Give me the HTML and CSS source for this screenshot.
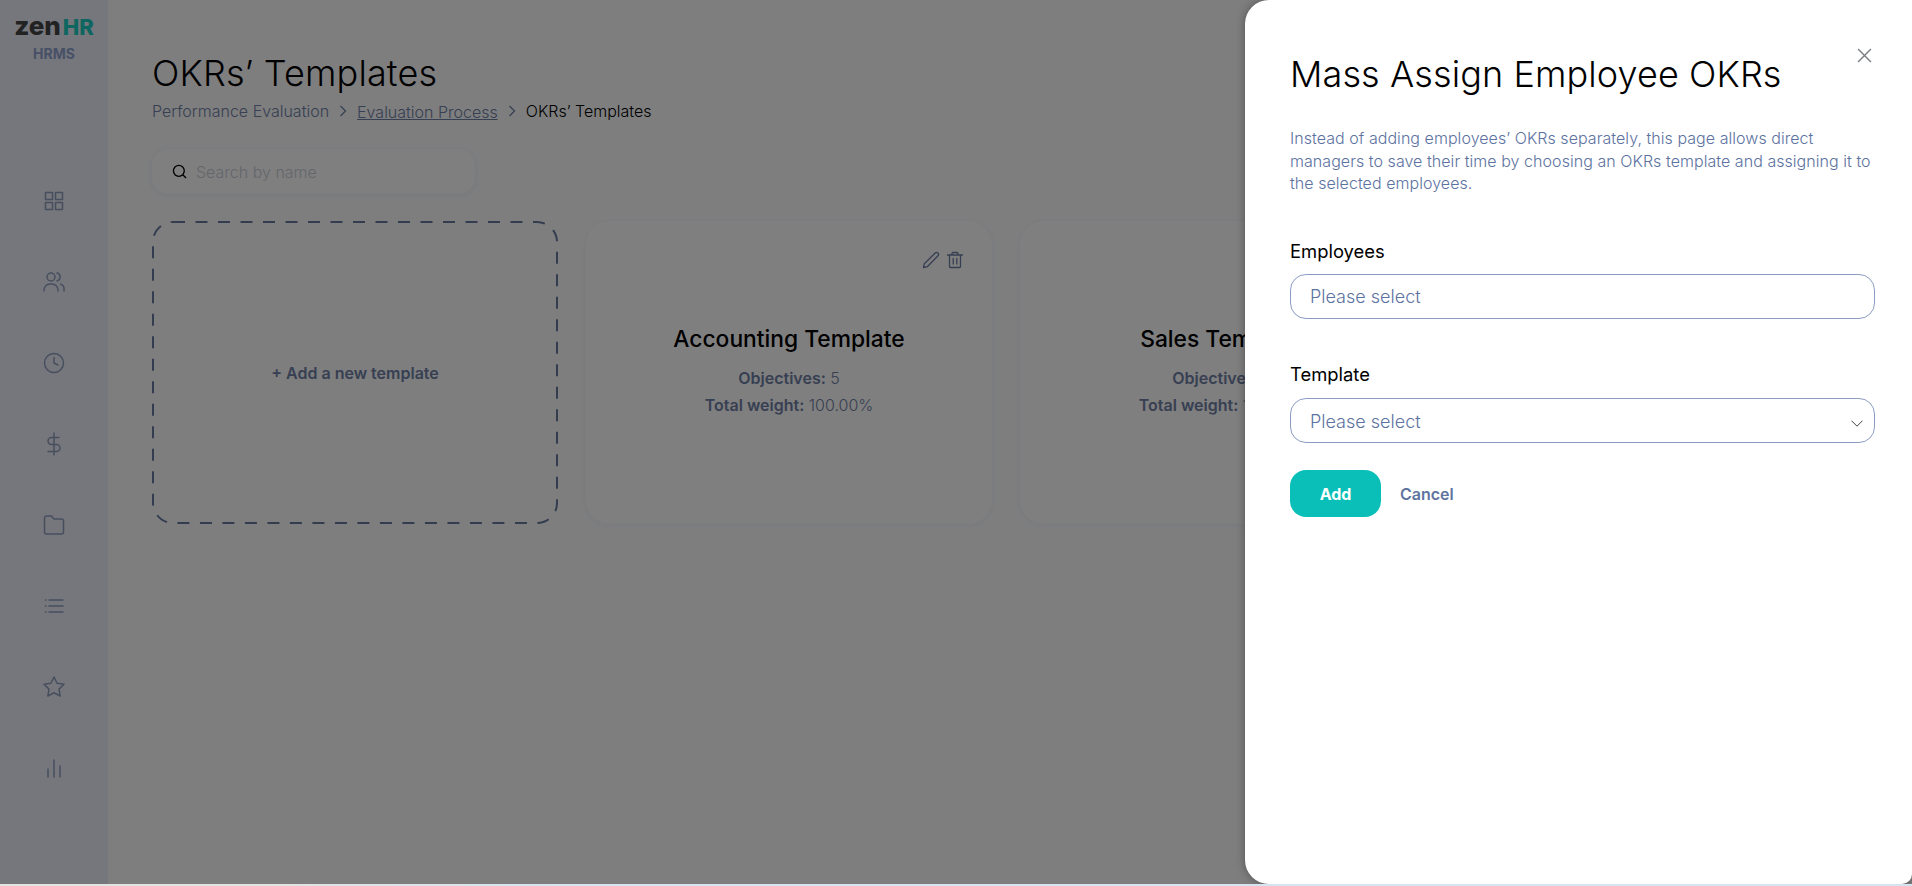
FILE: index.html
```html
<!DOCTYPE html>
<html lang="en">
  <head>
    <meta charset="UTF-8" />
    <title>OKRs' Templates</title>
    <link rel="stylesheet" href="styles.css">
  </head>
  <body>
    <div class="app">
      <aside class="sidebar">
        <div class="logo"><span class="logo-zen">zen</span><span class="logo-hr">HR</span></div>
        <div class="logo-sub">HRMS</div>
        <nav class="side-nav">
          <svg class="nav-icon" viewBox="0 0 24 24"><rect x="3.5" y="3.5" width="7" height="7" /><rect x="13.5" y="3.5" width="7" height="7" /><rect x="3.5" y="13.5" width="7" height="7" /><rect x="13.5" y="13.5" width="7" height="7" /></svg>
          <svg class="nav-icon" viewBox="0 0 24 24"><circle cx="9" cy="7" r="4" /><path d="M15 3.1a4 4 0 0 1 0 7.8" /><path d="M2 21v-1a6 6 0 0 1 6-6h2a6 6 0 0 1 6 6v1" /><path d="M18.5 14.2a4.5 4.5 0 0 1 3.5 4.4V21" /></svg>
          <svg class="nav-icon" viewBox="0 0 24 24"><circle cx="12" cy="12" r="9.5" /><path d="M12 6.5V12l4 2" /></svg>
          <svg class="nav-icon" viewBox="0 0 24 24"><path d="M12 1v22" /><path d="M17 5.5H9.5a3.5 3.5 0 0 0 0 7h5a3.5 3.5 0 0 1 0 7H6" /></svg>
          <svg class="nav-icon" viewBox="0 0 24 24"><path d="M2.5 5a2 2 0 0 1 2-2h5l2.5 3h7.500a2 2 0 0 1 2 2v11a2 2 0 0 1-2 2h-15a2 2 0 0 1-2-2z" /></svg>
          <svg class="nav-icon" viewBox="0 0 24 24"><path d="M7 6h14M7 12h14M7 18h14M3.500 6h.5M3.500 12h.5M3.500 18h.5" /></svg>
          <svg class="nav-icon" viewBox="0 0 24 24"><path d="M12 2l3.090 6.260L22 9.270l-5 4.870 1.180 6.880L12 17.770l-6.180 3.250L7 14.140 2 9.270l6.910-1.010z" /></svg>
          <svg class="nav-icon" viewBox="0 0 24 24"><path d="M6 13v8M12 4v17M18 10v11" /></svg>
        </nav>
      </aside>

      <main class="content">
        <h1 class="page-title">OKRs’ Templates</h1>
        <div class="breadcrumb">
          <span>Performance Evaluation</span>
          <svg class="crumb-sep" viewBox="0 0 8 12"><path d="M1.500 1l5 5-5 5" /></svg>
          <a href="#">Evaluation Process</a>
          <svg class="crumb-sep" viewBox="0 0 8 12"><path d="M1.500 1l5 5-5 5" /></svg>
          <span class="crumb-current">OKRs’ Templates</span>
        </div>

        <div class="search-box">
          <svg class="search-icon" viewBox="0 0 16 16"><circle cx="7.300" cy="7.300" r="5.800" /><path d="M11.500 11.500l3.500 3.500" /></svg>
          <input type="text" placeholder="Search by name" />
        </div>

        <div class="template-grid">
          <div class="template-card add-card">
            <svg class="dash-frame" width="100%" height="100%"><rect x="1" y="1" width="404" height="301" rx="20" /></svg>
            <span class="add-label">+ Add a new template</span>
          </div>
          <div class="template-card">
            <div class="card-actions">
              <svg viewBox="0 0 18 18"><path d="M1.500 16.500l.8-3.800L13.200 2a1.800 1.800 0 0 1 2.500 0l.3.300a1.800 1.800 0 0 1 0 2.500L5.300 15.700z" /></svg>
              <svg viewBox="0 0 18 18"><path d="M1.500 4h15M6 4V2.500A1 1 0 0 1 7 1.500h4a1 1 0 0 1 1 1V4M3.500 4v11.500a1 1 0 0 0 1 1h9a1 1 0 0 0 1-1V4M7.200 7.500v5.500M10.800 7.500v5.500" /></svg>
            </div>
            <h3 class="card-title">Accounting Template</h3>
            <p class="card-stat"><b>Objectives:</b> 5</p>
            <p class="card-stat"><b>Total weight:</b> 100.00%</p>
          </div>
          <div class="template-card">
            <h3 class="card-title">Sales Template</h3>
            <p class="card-stat"><b>Objectives:</b> 5</p>
            <p class="card-stat"><b>Total weight:</b> 100.00%</p>
          </div>
        </div>
      </main>

      <div class="overlay"></div>

      <section class="side-panel">
        <svg class="close-btn" viewBox="0 0 14 14"><path d="M1 1l12 12M13 1L1 13" /></svg>
        <h2 class="panel-title">Mass Assign Employee OKRs</h2>
        <p class="panel-desc">Instead of adding employees’ OKRs separately, this page allows direct managers to save their time by choosing an OKRs template and assigning it to the selected employees.</p>
        <form>
          <label class="field-label" for="employees">Employees</label>
          <input class="field-input" id="employees" type="text" placeholder="Please select" />
          <label class="field-label second" for="template">Template</label>
          <div class="select-wrap">
            <select class="field-input" id="template"><option>Please select</option></select>
            <svg class="select-arrow" viewBox="0 0 12 7"><path d="M.5.700L6 6.200 11.500.700" /></svg>
          </div>
          <div class="form-buttons">
            <button type="button" class="add-btn">Add</button>
            <button type="button" class="cancel-btn">Cancel</button>
          </div>
        </form>
      </section>
    </div>
    <div class="bottom-strip"></div>
  </body>
</html>
```

FILE: styles.css
```css
* {
  box-sizing: border-box;
}

body {
  font-family: "Inter", sans-serif;
  margin: 0;
  background: #d5e4f0;
  overflow: hidden;
}

.app {
  position: relative;
  display: flex;
  height: 884px;
  overflow: hidden;
  background: #fcfdff;
}

.bottom-strip {
  height: 2px;
  background: linear-gradient(90deg, #e2e3e3 15%, #d5e4f0 30%);
}

/* sidebar */
.sidebar {
  width: 108px;
  flex-shrink: 0;
  background: #eceef8;
  display: flex;
  flex-direction: column;
  align-items: center;
}

.logo {
  display: flex;
  align-items: baseline;
  gap: 2px;
  height: 42px;
  padding-top: 11px;
  line-height: 30px;
  font-weight: 800;
}

.logo-zen {
  font-size: 26px;
  color: #444446;
}

.logo-hr {
  font-size: 22px;
  color: #1bcdc0;
}

.logo-sub {
  margin-top: 3px;
  font-size: 14px;
  line-height: 18px;
  font-weight: 700;
  color: #8ea1cf;
}

.side-nav {
  margin-top: 126px;
  display: flex;
  flex-direction: column;
  gap: 57px;
}

.nav-icon {
  display: block;
  width: 24px;
  height: 24px;
  fill: none;
  stroke: #8f9dbd;
  stroke-width: 1.5;
  stroke-linecap: round;
  stroke-linejoin: round;
}

/* main area */
.content {
  flex: 1;
  padding: 50px 44px 0;
}

.page-title {
  margin: 0;
  font-size: 36px;
  line-height: 46px;
  font-weight: 300;
  letter-spacing: 0.15px;
  color: #000;
}

.breadcrumb {
  display: flex;
  align-items: center;
  height: 24px;
  margin-top: 3px;
  font-size: 16px;
  font-weight: 300;
  color: #6f80a4;
}

.breadcrumb a {
  margin-top: 2px;
  color: #6f80a4;
  text-decoration: underline;
}

.crumb-sep {
  width: 8px;
  height: 12px;
  margin: 0 10px;
  fill: none;
  stroke: #6f80a4;
  stroke-width: 1.3;
}

.crumb-current {
  color: #000;
}

.search-box {
  display: flex;
  align-items: center;
  gap: 9px;
  width: 323px;
  height: 45px;
  margin-top: 26px;
  padding-left: 20px;
  background: #fff;
  border-radius: 16px;
  box-shadow: 0 1px 6px rgba(30, 50, 90, 0.08);
}

.search-icon {
  width: 15px;
  height: 15px;
  flex-shrink: 0;
  fill: none;
  stroke: #000;
  stroke-width: 1.4;
}

.search-box input {
  border: none;
  outline: none;
  background: transparent;
  font-family: inherit;
  font-size: 16px;
  font-weight: 300;
  flex: 1;
  padding: 0;
}

.search-box input::placeholder {
  color: #c9cdd6;
}

.template-grid {
  display: grid;
  grid-template-columns: repeat(3, 406px);
  gap: 28px;
  margin-top: 27px;
}

.template-card {
  position: relative;
  height: 303px;
  padding-bottom: 3px;
  background: #fff;
  border-radius: 24px;
  box-shadow: 0 1px 6px rgba(30, 50, 90, 0.06);
  display: flex;
  flex-direction: column;
  align-items: center;
  justify-content: center;
}

.add-card {
  padding-bottom: 0;
  background: transparent;
  box-shadow: none;
  border-radius: 0;
}

.dash-frame {
  position: absolute;
  top: 0;
  left: 0;
}

.dash-frame rect {
  fill: none;
  stroke: #677a9f;
  stroke-width: 2;
  stroke-dasharray: 12 10.500;
}

.add-label {
  font-size: 16px;
  font-weight: 600;
  color: #6f80a4;
}

.card-actions {
  position: absolute;
  top: 30px;
  right: 28px;
  display: flex;
  gap: 6px;
}

.card-actions svg {
  width: 18px;
  height: 18px;
  fill: none;
  stroke: #6c7da3;
  stroke-width: 1.3;
  stroke-linecap: round;
  stroke-linejoin: round;
}

.card-title {
  margin: 0 0 10.500px;
  font-size: 22.800px;
  line-height: 32px;
  font-weight: 500;
  color: #000;
}

.card-stat {
  margin: 0;
  font-size: 16px;
  line-height: 27px;
  font-weight: 300;
  color: #6f80a4;
}

.card-stat b {
  font-weight: 600;
}

/* modal */
.overlay {
  position: absolute;
  top: 0;
  left: 0;
  width: 100%;
  height: 100%;
  background: rgba(0, 0, 0, 0.5);
}

.side-panel {
  position: absolute;
  top: 0;
  right: 0;
  bottom: 0;
  width: 667px;
  padding: 49px 37px 0 45px;
  background: #fff;
  border-radius: 24px 0 10px 24px;
  box-shadow: 0 0 10px rgba(0, 0, 0, 0.35);
}

.close-btn {
  position: absolute;
  top: 48px;
  right: 40px;
  width: 15px;
  height: 15px;
  fill: none;
  stroke: #7e8186;
  stroke-width: 1.4;
}

.panel-title {
  margin: 0;
  font-size: 36px;
  line-height: 50px;
  font-weight: 300;
  letter-spacing: 0.1px;
  color: #000;
}

.panel-desc {
  margin: 28px 0 0;
  font-size: 16px;
  line-height: 22.700px;
  font-weight: 300;
  letter-spacing: 0.05px;
  color: #5c72a0;
}

.field-label {
  display: block;
  margin-top: 44px;
  font-size: 18.400px;
  line-height: 24px;
  font-weight: 400;
  color: #000;
}

.field-label.second {
  margin-top: 43px;
}

.field-input {
  display: block;
  width: 100%;
  height: 45px;
  margin-top: 11px;
  padding: 0 19px;
  border: 1px solid #8c9dc2;
  border-radius: 16px;
  background: #fff;
  font-family: inherit;
  font-size: 18px;
  font-weight: 300;
  color: #5c72a0;
  outline: none;
  appearance: none;
}

.field-input::placeholder {
  color: #5c72a0;
  opacity: 1;
}

.select-wrap {
  position: relative;
  padding-top: 1px;
}

select.field-input {
  padding-top: 2px;
}

.select-arrow {
  position: absolute;
  right: 12px;
  top: 34px;
  width: 12px;
  height: 7px;
  fill: none;
  stroke: #44474f;
  stroke-width: 1;
}

.form-buttons {
  display: flex;
  align-items: center;
  gap: 19px;
  margin-top: 27px;
}

.add-btn {
  width: 91px;
  height: 47px;
  border: none;
  border-radius: 16px;
  background: #0abfb8;
  color: #fff;
  font-family: inherit;
  font-size: 16px;
  font-weight: 700;
}

.cancel-btn {
  border: none;
  padding: 0;
  background: none;
  color: #5f749f;
  font-family: inherit;
  font-size: 16px;
  font-weight: 600;
}
```
